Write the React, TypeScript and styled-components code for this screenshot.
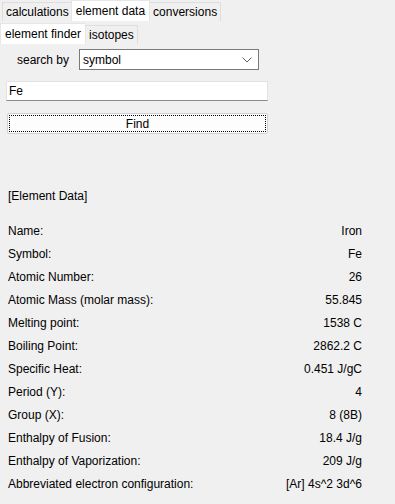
import React, { useState } from "react";
import styled, { createGlobalStyle } from "styled-components";

const GlobalStyle = createGlobalStyle`
  html, body {
    margin: 0;
    padding: 0;
    background: #f0f0f0;
  }
  body {
    font-family: "Liberation Sans", Arial, sans-serif;
    font-size: 12px;
    color: #000;
  }
`;

const rows = [
  ["Name:", "Iron"],
  ["Symbol:", "Fe"],
  ["Atomic Number:", "26"],
  ["Atomic Mass (molar mass):", "55.845"],
  ["Melting point:", "1538 C"],
  ["Boiling Point:", "2862.2 C"],
  ["Specific Heat:", "0.451 J/gC"],
  ["Period (Y):", "4"],
  ["Group (X):", "8 (8B)"],
  ["Enthalpy of Fusion:", "18.4 J/g"],
  ["Enthalpy of Vaporization:", "209 J/g"],
  ["Abbreviated electron configuration:", "[Ar] 4s^2 3d^6"],
];

function App() {
  const [top, setTop] = useState("element data");
  const [sub, setSub] = useState("element finder");
  const [query, setQuery] = useState("Fe");

  return (
    <Window>
      <GlobalStyle />
      <TabBar $first>
        {["calculations", "element data", "conversions"].map(t => (
          <Tab key={t} $active={top === t} onClick={() => setTop(t)}>
            {t}
          </Tab>
        ))}
      </TabBar>
      <TabBar>
        {["element finder", "isotopes"].map(t => (
          <Tab key={t} $active={sub === t} onClick={() => setSub(t)}>
            {t}
          </Tab>
        ))}
      </TabBar>

      <Form>
        <SearchRow>
          <Label>search by</Label>
          <Combo>
            <span>symbol</span>
            <svg width="10" height="6" viewBox="0 0 10 6">
              <path d="M0.5 0.5 L5 5 L9.5 0.5" fill="none" stroke="#606060" strokeWidth="1" />
            </svg>
          </Combo>
        </SearchRow>
        <Input value={query} onChange={e => setQuery(e.target.value)} />
        <FindButton>Find</FindButton>
      </Form>

      <SectionTitle>[Element Data]</SectionTitle>

      <DataList>
        {rows.map(([k, v]) => (
          <DataRow key={k}>
            <span>{k}</span>
            <Value>{v}</Value>
          </DataRow>
        ))}
      </DataList>
    </Window>
  );
}

export default App;

export const Window = styled.div`
  width: 395px;
  height: 504px;
  background: #f0f0f0;
  overflow: hidden;
`;

export const TabBar = styled.div<{ $first?: boolean }>`
  display: flex;
  align-items: flex-end;
  height: ${p => (p.$first ? "21px" : "22px")};
  padding-left: ${p => (p.$first ? "2px" : "0")};
  padding-top: ${p => (p.$first ? "0" : "1px")};
`;

export const Tab = styled.div<{ $active?: boolean }>`
  box-sizing: border-box;
  display: flex;
  align-items: center;
  padding: 0 ${p => (p.$active ? "4px" : "3px")};
  height: ${p => (p.$active ? "21px" : "19px")};
  margin-left: ${p => (p.$active ? "-2px" : "0")};
  margin-right: ${p => (p.$active ? "-1px" : "0")};
  background: ${p => (p.$active ? "#ffffff" : "#f0f0f0")};
  border: 1px solid ${p => (p.$active ? "#e6e6e6" : "#dedede")};
  border-bottom: none;
  position: relative;
  z-index: ${p => (p.$active ? 1 : 0)};
  cursor: pointer;
  white-space: nowrap;
  &:first-child {
    margin-left: 0;
  }
`;

export const Form = styled.div`
  display: flex;
  flex-direction: column;
  padding: 5px 0 0 6px;
  width: 262px;
`;

export const SearchRow = styled.div`
  display: flex;
  align-items: center;
  height: 21px;
`;

export const Label = styled.span`
  width: 73px;
  padding-left: 11px;
  box-sizing: border-box;
`;

export const Combo = styled.div`
  box-sizing: border-box;
  display: flex;
  align-items: center;
  justify-content: space-between;
  width: 180px;
  height: 21px;
  padding: 0 6px 0 3px;
  background: #fff;
  border: 1px solid #7a7a7a;
`;

export const Input = styled.input`
  box-sizing: border-box;
  margin-top: 11px;
  width: 262px;
  height: 20px;
  padding: 0 2px;
  font: inherit;
  color: #000;
  background: #fff;
  border: 1px solid #e3e3e3;
  border-bottom-color: #8a8a8a;
  outline: none;
`;

export const FindButton = styled.button`
  box-sizing: border-box;
  margin: 12px 0 0 1px;
  width: 261px;
  height: 21px;
  font: inherit;
  color: #000;
  background: #fdfdfd;
  border: 1px solid #d0d0d0;
  border-radius: 2px;
  outline: 1px dotted #000;
  outline-offset: -3px;
  padding: 0;
`;

export const SectionTitle = styled.div`
  margin: 53px 0 0 8px;
  height: 18px;
  line-height: 18px;
`;

export const DataList = styled.div`
  display: flex;
  flex-direction: column;
  margin-top: 15px;
  width: 362px;
  padding-left: 8px;
  box-sizing: border-box;
`;

export const DataRow = styled.div`
  display: flex;
  justify-content: space-between;
  height: 23px;
  line-height: 23px;
`;

export const Value = styled.span`
  text-align: right;
`;
